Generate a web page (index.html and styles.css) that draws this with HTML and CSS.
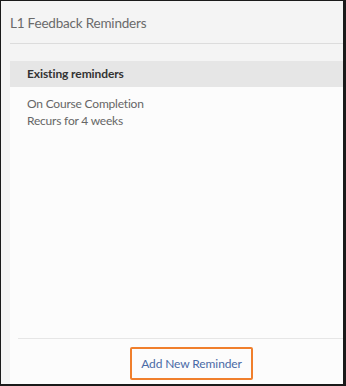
FILE: index.html
```html
<!DOCTYPE html>
<html>

<head>
    <title>L1 Feedback Reminders</title>
    <link rel="stylesheet" href="styles.css">
</head>

<body>
    <div class="frame">
        <h1 class="page-title">L1 Feedback Reminders</h1>
        <div class="panel">
            <div class="panel-heading">Existing reminders</div>
            <div class="panel-body">
                <div class="reminder">
                    <div>On Course Completion</div>
                    <div>Recurs for 4 weeks</div>
                </div>
            </div>
            <div class="panel-footer">
                <button class="add-btn">Add New Reminder</button>
            </div>
        </div>
    </div>
</body>

</html>
```

FILE: styles.css
```css
html,
body {
    margin: 0;
    padding: 0;
}

body {
    font-family: Lato, "Open Sans", sans-serif;
    background: #fff;
}

.frame {
    width: 346px;
    height: 386px;
    box-sizing: border-box;
    border-top: 1px solid #1a1a1a;
    border-left: 1px solid #1a1a1a;
    border-right: 3px solid #1a1a1a;
    border-bottom: 2px solid #1a1a1a;
    background: #f4f4f4;
    display: flex;
    flex-direction: column;
    overflow: hidden;
}

.page-title {
    margin: 0 0 0 9px;
    padding: 14px 0 12px 0;
    font-size: 13.5px;
    font-weight: normal;
    line-height: 16px;
    letter-spacing: -0.2px;
    color: #6a6a6a;
    border-bottom: 1px solid #dcdcdc;
}

.panel {
    margin: 17px 0 0 9px;
    flex: 1;
    background: #fcfcfc;
    display: flex;
    flex-direction: column;
}

.panel-heading {
    height: 26px;
    line-height: 26px;
    padding-left: 17px;
    background: #e6e6e6;
    color: #333;
    font-size: 12px;
    font-weight: bold;
    letter-spacing: -0.1px;
}

.panel-body {
    flex: 1;
    padding: 8px 17px;
}

.reminder {
    font-size: 12px;
    line-height: 17px;
    letter-spacing: -0.2px;
    color: #666;
}

.panel-footer {
    margin-left: 8px;
    border-top: 1px solid #e6e6e6;
    padding: 8px 0 4px 112px;
}

.add-btn {
    width: 123px;
    height: 33px;
    border: 2px solid #f07f2c;
    border-radius: 2px;
    background: #fcfcfc;
    color: #4a6aa6;
    font-family: Lato, "Open Sans", sans-serif;
    font-size: 12px;
    letter-spacing: -0.1px;
    padding: 0;
}
```
